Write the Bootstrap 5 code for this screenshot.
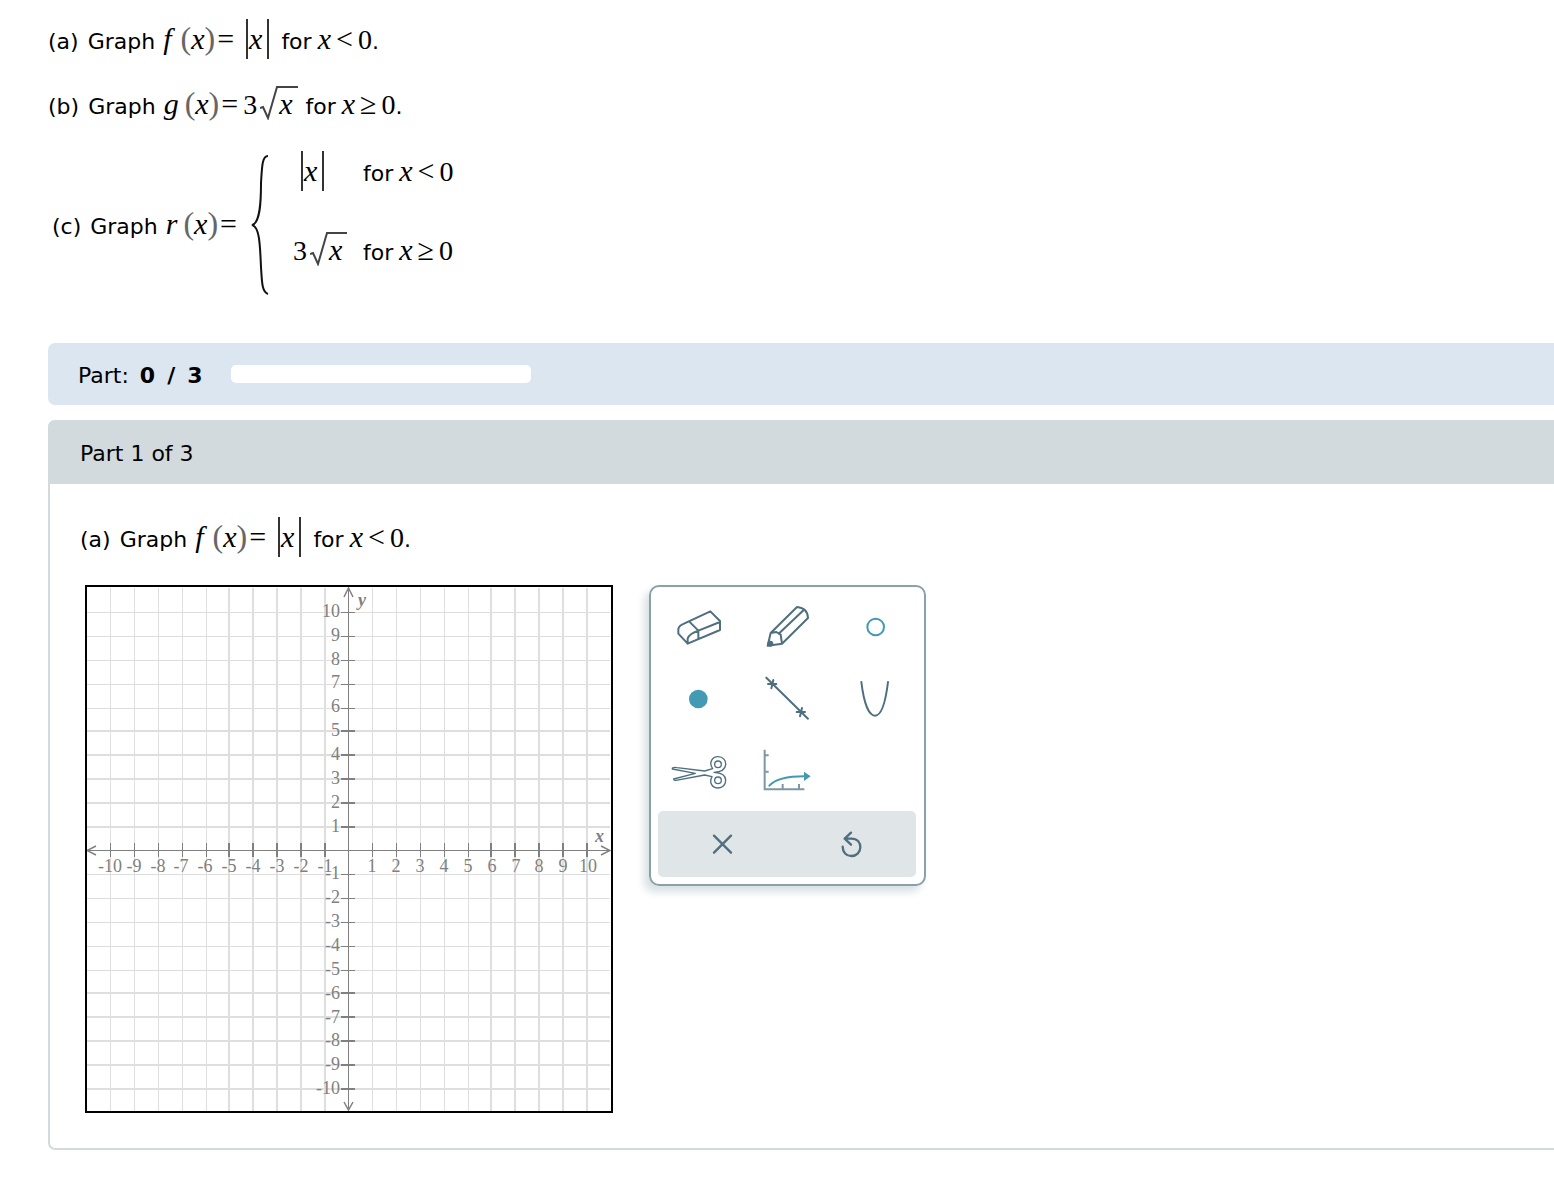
<!DOCTYPE html>
<html lang="en">
<head>
<meta charset="utf-8">
<meta name="viewport" content="width=device-width, initial-scale=1">
<title>Graph a piecewise function</title>
<link href="https://cdn.jsdelivr.net/npm/bootstrap@5.3.0/dist/css/bootstrap.min.css" rel="stylesheet">
<style>
body{font-family:"DejaVu Sans",Verdana,sans-serif;font-size:22px;line-height:28px;color:#000;background:#fff}
.page{padding:19px 0 48px 48px}
.formula{display:flex;align-items:baseline;white-space:nowrap}
.formula i,.formula b{font-family:"Liberation Serif","Times New Roman",serif;font-size:28px;font-weight:400;line-height:28px}
.formula i,.formula .op{font-size:30px}
.formula .paren{font-size:32px;color:#666}
.label-gap{margin-right:9px}
.fn{margin-left:8px;margin-right:6px}
.fn-f{margin-left:8px;margin-right:9px}
.eq{margin-left:2px}
.coef{margin-left:5px}
.word{margin-left:8px}
.var{margin-left:6px}
.rel{margin:0 5px}
.formula .abs{display:inline-block;height:40px;line-height:40px;border:solid #333;border-width:0 2px;padding:0 5px 0 1px}
.formula .abs i{line-height:40px}
.abs-gap{margin-left:12px;margin-right:4px}
.surd{margin-left:3px}
.surd svg{width:18px;height:34px;vertical-align:-6px}
.formula .surd i{display:inline-block;line-height:32px;border-top:2px solid #444;padding:0 5px 0 1px}
.line-a{margin-bottom:27px}
.line-b{margin-bottom:30px}
.case-name{margin-top:58px}
.brace{margin:4px 24px 0 14px}
.cases{display:grid;grid-template-columns:70px auto;row-gap:41px;align-items:baseline}
.status{background:#dce6f0;border-radius:7px 0 0 7px;height:62px;padding-left:30px;gap:28px}
.status-text{gap:11px;padding-top:3px}
.status-count{gap:12px}
.status .progress{width:300px;height:18px;background:#fff;border-radius:5px}
.part-card{margin-top:15px;border:2px solid #d3dadd;border-top:0;border-right:0;border-radius:7px 0 0 7px}
.part-head{background:#d3dadd;padding:20px 30px 16px;margin-left:-2px;padding-left:32px;border-radius:7px 0 0 0}
.part-body{padding:33px 0 35px 30px}
.part-line{margin-bottom:28px}
.work{gap:36px;padding-left:5px}
.plot{width:528px;height:528px;border:2px solid #000}
.plot text{font-family:"Liberation Serif","Times New Roman",serif;font-size:18px;fill:#808080}
.tools{width:277px;border:2px solid #8aa0aa;border-radius:10px;box-shadow:-5px 6px 8px #d8e0e4;padding:4px 8px 7px 7px}
.tool-grid{display:grid;grid-template-columns:repeat(3,88px);justify-content:center;margin-bottom:4px}
.tool-btn{border:0;padding:0;background:none;height:72px}
.tool-btn svg,.act-btn svg{display:block;width:88px;height:72px;fill:none;stroke:#4f6f7e;stroke-width:6;stroke-linejoin:round;stroke-linecap:round}
.act-row{background:#e0e6e8;border-radius:5px}
.act-btn{border:0;padding:0;background:none;height:66px}
.act-btn svg{width:100%;height:66px}
</style>
<script src="https://cdn.jsdelivr.net/npm/bootstrap@5.3.0/dist/js/bootstrap.bundle.min.js"></script>
</head>
<body>
<main class="page">
  <section class="problem">
    <div class="formula line-a"><span class="label-gap">(a)</span><span>Graph</span><i class="fn-f">f</i><b class="paren">(</b><i>x</i><b class="paren">)</b><b class="op eq">=</b><span class="abs abs-gap"><i>x</i></span><span class="word">for</span><i class="var">x</i><b class="op rel">&lt;</b><b>0</b><span>.</span></div>
    <div class="formula line-b"><span class="label-gap">(b)</span><span>Graph</span><i class="fn">g</i><b class="paren">(</b><i>x</i><b class="paren">)</b><b class="op eq">=</b><b class="coef">3</b><span class="surd"><svg viewBox="0 0 18 34" aria-hidden="true"><path d="M0 22l3-1 5 11L17 1h1" fill="none" stroke="#444" stroke-width="2"/></svg><i>x</i></span><span class="word">for</span><i class="var">x</i><b class="op rel">≥</b><b>0</b><span>.</span></div>
    <div class="d-flex align-items-start ps-1">
      <div class="formula case-name"><span class="label-gap">(c)</span><span>Graph</span><i class="fn">r</i><b class="paren">(</b><i>x</i><b class="paren">)</b><b class="op eq">=</b></div>
      <svg class="brace" width="18" height="140" viewBox="0 0 18 140" aria-hidden="true"><path d="M17 1C11 1 11 12 10 28C10 48 9 68 1 70C9 72 9 92 10 112C11 128 11 137 17 139" fill="none" stroke="#111" stroke-width="2"/></svg>
      <div class="cases">
        <div class="formula ps-2"><span class="abs"><i>x</i></span></div>
        <div class="formula"><span>for</span><i class="var">x</i><b class="op rel">&lt;</b><b>0</b></div>
        <div class="formula"><b>3</b><span class="surd"><svg viewBox="0 0 18 34" aria-hidden="true"><path d="M0 22l3-1 5 11L17 1h1" fill="none" stroke="#444" stroke-width="2"/></svg><i>x</i></span></div>
        <div class="formula"><span>for</span><i class="var">x</i><b class="op rel">≥</b><b>0</b></div>
      </div>
    </div>
  </section>

  <div class="status d-flex align-items-center mt-5">
    <div class="status-text d-flex"><span>Part:</span><strong class="status-count d-flex"><span>0</span><span>/</span><span>3</span></strong></div>
    <div class="progress" role="progressbar" aria-label="Parts completed" aria-valuenow="0" aria-valuemin="0" aria-valuemax="3"><div class="progress-bar w-0"></div></div>
  </div>

  <section class="part-card">
    <div class="part-head">Part 1 of 3</div>
    <div class="part-body">
      <div class="formula part-line"><span class="label-gap">(a)</span><span>Graph</span><i class="fn-f">f</i><b class="paren">(</b><i>x</i><b class="paren">)</b><b class="op eq">=</b><span class="abs abs-gap"><i>x</i></span><span class="word">for</span><i class="var">x</i><b class="op rel">&lt;</b><b>0</b><span>.</span></div>
      <div class="work d-flex align-items-start">
        <svg class="plot flex-shrink-0" viewBox="0 0 524 524" role="img" aria-label="Coordinate plane from -10 to 10">
          <g fill="none" stroke="#dedede">
            <path d="M23.5 1V524M47.5 1V524M71.5 1V524M95.5 1V524M119.5 1V524M285.5 1V524M309.5 1V524M333.5 1V524M357.5 1V524M381.5 1V524M0 25.5H523M0 49.5H523M0 73.5H523M0 97.5H523M0 121.5H523M0 287.5H523M0 311.5H523M0 335.5H523M0 359.5H523M0 383.5H523"/>
            <path stroke-width="2" d="M142 1V524M166 1V524M190 1V524M214 1V524M238 1V524M404 1V524M428 1V524M452 1V524M476 1V524M500 1V524M0 144H523M0 168H523M0 192H523M0 216H523M0 240H523M0 406H523M0 430H523M0 454H523M0 478H523M0 502H523"/>
          </g>
          <g fill="none" stroke="#808080">
            <path d="M0 263.5H523M261.5 1V524M23.5 256v14M47.5 256v14M71.5 256v14M95.5 256v14M119.5 256v14M285.5 256v14M309.5 256v14M333.5 256v14M357.5 256v14M381.5 256v14M254 25.5h14M254 49.5h14M254 73.5h14M254 97.5h14M254 121.5h14M254 287.5h14M254 311.5h14M254 335.5h14M254 359.5h14M254 383.5h14"/>
            <path stroke-width="2" d="M142 256v14M166 256v14M190 256v14M214 256v14M238 256v14M404 256v14M428 256v14M452 256v14M476 256v14M500 256v14M254 144h14M254 168h14M254 192h14M254 216h14M254 240h14M254 406h14M254 430h14M254 454h14M254 478h14M254 502h14"/>
            <path stroke-width="1.5" d="M9 259L0 263.5L9 268M514 259L523 263.5L514 268M257 10L261.5 1L266 10M257 515L261.5 523L266 515"/>
          </g>
          <g text-anchor="middle">
            <text x="23" y="285">-10</text><text x="47" y="285">-9</text><text x="71" y="285">-8</text><text x="94" y="285">-7</text><text x="118" y="285">-6</text><text x="142" y="285">-5</text><text x="166" y="285">-4</text><text x="190" y="285">-3</text><text x="214" y="285">-2</text><text x="238" y="285">-1</text>
            <text x="285" y="285">1</text><text x="309" y="285">2</text><text x="333" y="285">3</text><text x="357" y="285">4</text><text x="381" y="285">5</text><text x="405" y="285">6</text><text x="429" y="285">7</text><text x="452" y="285">8</text><text x="476" y="285">9</text><text x="501" y="285">10</text>
          </g>
          <g text-anchor="end">
            <text x="253" y="30">10</text><text x="253" y="54">9</text><text x="253" y="78">8</text><text x="253" y="101">7</text><text x="253" y="125">6</text><text x="253" y="149">5</text><text x="253" y="173">4</text><text x="253" y="197">3</text><text x="253" y="221">2</text><text x="253" y="245">1</text>
            <text x="253" y="292">-1</text><text x="253" y="316">-2</text><text x="253" y="340">-3</text><text x="253" y="364">-4</text><text x="253" y="388">-5</text><text x="253" y="412">-6</text><text x="253" y="436">-7</text><text x="253" y="459">-8</text><text x="253" y="483">-9</text><text x="253" y="507">-10</text>
          </g>
          <g font-style="italic" font-weight="bold"><text x="271" y="19">y</text><text x="508" y="255">x</text></g>
        </svg>

        <div class="tools flex-shrink-0" role="toolbar" aria-label="Graphing tools">
          <div class="tool-grid">
            <button type="button" class="tool-btn" aria-label="Eraser"><svg viewBox="45 48 264 216"><path d="M211 109L240 138V165L143 206L115 176V162Q117 152 132 146ZM148 140L175 167L240 141M175 167V192M143 206V190Q148 177 175 167"/></svg></button>
            <button type="button" class="tool-btn" aria-label="Pencil"><svg viewBox="309 48 264 216"><path d="M471 96L392 174L383 212L426 206L504 129Q503 99 471 96ZM392 174L409 171L422 179L426 206M416 176L492 104"/><circle cx="391" cy="206" r="6" fill="#4f6f7e"/></svg></button>
            <button type="button" class="tool-btn" aria-label="Open point"><svg viewBox="573 48 264 216"><circle cx="707" cy="156" r="25" stroke="#4499b3"/></svg></button>
            <button type="button" class="tool-btn" aria-label="Closed point"><svg viewBox="45 264 264 216"><circle cx="175" cy="372" r="28" fill="#4499b3" stroke="none"/></svg></button>
            <button type="button" class="tool-btn" aria-label="Line"><svg viewBox="309 264 264 216"><path d="M379 308L504 431M384 327H409M400 315L394 340M470 411H495M486 399L480 424"/></svg></button>
            <button type="button" class="tool-btn" aria-label="Parabola"><svg viewBox="573 264 264 216"><path d="M664 321C671 379 685 422 705 422S737 379 744 321"/></svg></button>
            <button type="button" class="tool-btn" aria-label="Cut"><svg viewBox="45 0 264 216"><g stroke-width="4"><path d="M97 99Q103 96 111 98L194 108L218 101C205 83 217 65 234 65C250 65 258 77 257 89C256 103 244 111 222 112C244 113 257 121 257 136C257 149 248 159 234 159C217 159 206 143 216 125L194 120L108 136Q101 136 101 132L166 115L97 102Z"/><circle cx="234" cy="88" r="10"/><circle cx="234" cy="136" r="10"/></g></svg></button>
            <button type="button" class="tool-btn" aria-label="Square root curve"><svg viewBox="309 0 264 216"><path d="M374 47V163H490M374 61H383M374 110H383M428 163V150M477 163V150" stroke="#7d98a2" stroke-linecap="square" stroke-linejoin="miter"/><path d="M388 152Q413 124 494 124" stroke="#4499b3"/><path d="M492 110L512 124L492 138Z" fill="#4499b3" stroke="none"/></svg></button>
          </div>
          <div class="act-row row g-0">
            <button type="button" class="act-btn col" aria-label="Clear"><svg viewBox="54 228 387 198"><path d="M222 302L273 353M273 302L222 353" stroke-width="7"/></svg></button>
            <button type="button" class="act-btn col" aria-label="Undo"><svg viewBox="441 228 387 198"><path d="M633 293L614 311L633 329M614 311H634C653 311 661 324 661 337C661 352 649 363 634 363C619 363 608 352 608 335" stroke-width="7"/></svg></button>
          </div>
        </div>
      </div>
    </div>
  </section>
</main>
</body>
</html>
